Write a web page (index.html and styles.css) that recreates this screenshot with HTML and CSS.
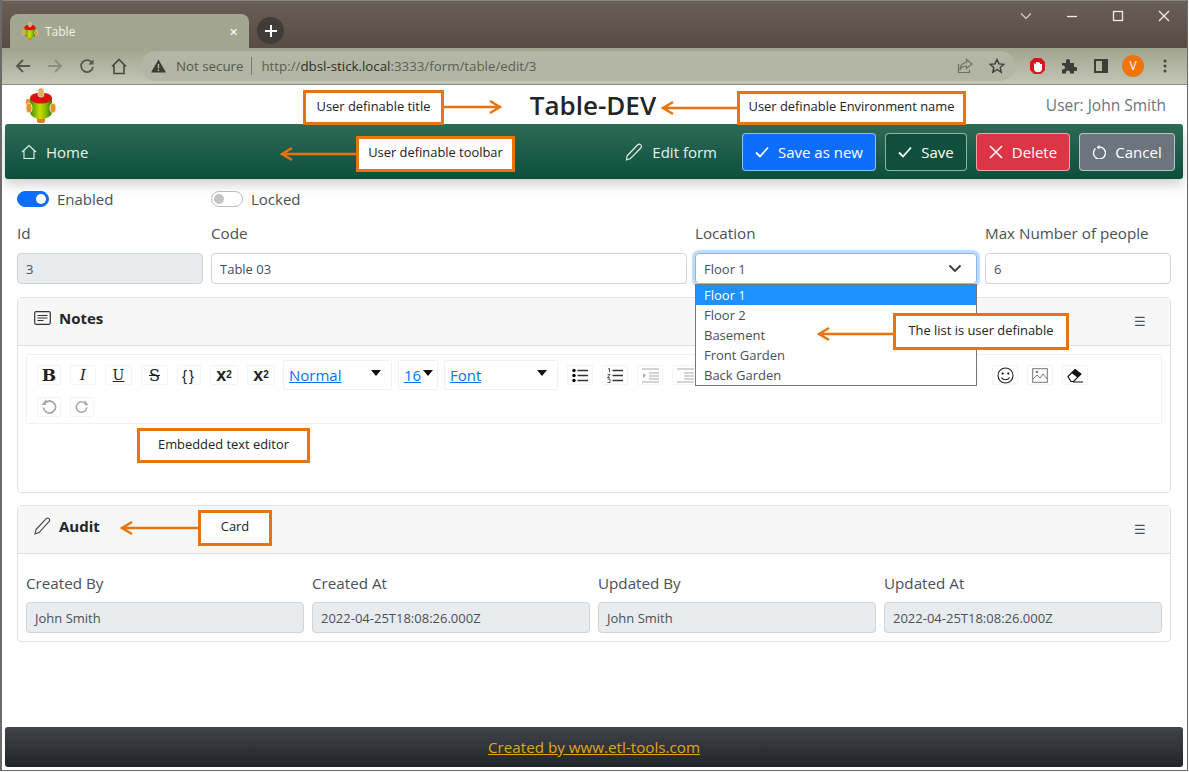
FILE: index.html
```html
<!DOCTYPE html>
<html lang="en">
<head>
  <meta charset="UTF-8">
  <title>Table</title>
  <link rel="stylesheet" href="styles.css">
</head>
<body>
  <svg class="defs" width="0" height="0">
    <defs>
      <linearGradient id="ball" x1="0" y1="0" x2="1" y2="0">
        <stop offset="0" stop-color="#3f8f00"/>
        <stop offset="0.45" stop-color="#c8dc00"/>
        <stop offset="0.7" stop-color="#8cc000"/>
        <stop offset="1" stop-color="#2f7a00"/>
      </linearGradient>
      <symbol id="logo" viewBox="0 0 32 36">
        <rect x="12" y="28" width="8" height="8" rx="2" fill="#e8801a"/>
        <rect x="1" y="12" width="5" height="8" rx="2" fill="#ef8f20"/>
        <path d="M5 11h22v14c0 4-5 7-11 7S5 29 5 25z" fill="url(#ball)"/>
        <ellipse cx="4" cy="21" rx="3" ry="5" fill="#e8902a" stroke="#f7ecc4"/>
        <ellipse cx="28" cy="21" rx="3" ry="5" fill="#e8902a" stroke="#f7ecc4"/>
        <ellipse cx="16" cy="11" rx="11" ry="5.500" fill="#dc1010"/>
        <rect x="13" y="1" width="6" height="9" rx="2.500" fill="#dcae68" stroke="#f7ecc4" stroke-width=".7"/>
      </symbol>
    </defs>
  </svg>

  <div class="window">
    <div class="tabbar">
      <div class="tab">
        <svg class="favicon"><use href="#logo"/></svg>
        <span class="tab-title">Table</span>
        <span class="tab-close">✕</span>
      </div>
      <div class="new-tab">
        <svg width="14" height="14" viewBox="0 0 14 14"><path d="M7 1v12M1 7h12" stroke="#fff" stroke-width="2"/></svg>
      </div>
      <div class="win-controls">
        <svg width="12" height="12" viewBox="0 0 12 12"><path d="M1 3.500l5 5 5-5" fill="none" stroke="#d5d0c8" stroke-width="1.200"/></svg>
        <svg width="12" height="12" viewBox="0 0 12 12"><path d="M1 6.500h10" stroke="#eee" stroke-width="1.300"/></svg>
        <svg width="12" height="12" viewBox="0 0 12 12"><rect x="1.500" y="1.500" width="9" height="9" fill="none" stroke="#eee" stroke-width="1.300"/></svg>
        <svg width="12" height="12" viewBox="0 0 12 12"><path d="M1 1l10 10M11 1L1 11" stroke="#eee" stroke-width="1.300"/></svg>
      </div>
    </div>

    <div class="addressbar">
      <div class="nav-icons">
        <svg width="16" height="16" viewBox="0 0 16 16"><path d="M15 8H2M8 2L2 8l6 6" fill="none" stroke="#55584e" stroke-width="1.800"/></svg>
        <svg width="16" height="16" viewBox="0 0 16 16"><path d="M1 8h13M8 2l6 6-6 6" fill="none" stroke="#8b8f7e" stroke-width="1.800"/></svg>
        <svg width="16" height="16" viewBox="0 0 16 16"><path d="M13.500 5.500A6 6 0 1 0 14 9" fill="none" stroke="#55584e" stroke-width="1.800"/><path d="M14.500 1.500v5h-5z" fill="#55584e"/></svg>
        <svg width="16" height="17" viewBox="0 0 16 17"><path d="M1 8.500L8 1.500l7 7M3 7.500v8h10v-8" fill="none" stroke="#45483f" stroke-width="1.600"/></svg>
      </div>
      <div class="omnibox">
        <svg width="15" height="14" viewBox="0 0 15 14"><path d="M7.500 0.500L15 13.500H0z" fill="#3c3f38"/><path d="M7.500 5v4.500M7.500 10.500v1.500" stroke="#b3b6a4" stroke-width="1.400"/></svg>
        <span class="not-secure">Not secure</span>
        <span class="url"><span class="url-dim">http://</span>dbsl-stick.local<span class="url-dim">:3333/form/table/edit/3</span></span>
        <span class="omni-right">
          <svg width="16" height="16" viewBox="0 0 16 16"><path d="M9.500 1.500L15 6l-5.500 4.500V8C6 8 4 9.500 3 12c0-4.500 2.500-7 6.500-7.500zM1.500 6v8.500h11V12" fill="none" stroke="#6d7063" stroke-width="1.200"/></svg>
          <svg width="16" height="16" viewBox="0 0 16 16"><path d="M8 1.500l2 4.400 4.800.5-3.600 3.200 1 4.700L8 11.500l-4.200 2.800 1-4.700L1.200 6.400 6 5.900z" fill="none" stroke="#3c3f38" stroke-width="1.400"/></svg>
        </span>
      </div>
      <div class="ext-icons">
        <span class="ext-cell"><svg width="17" height="18" viewBox="0 0 17 18"><path d="M5 1h7l4 4v8l-4 4H5l-4-4V5z" fill="#d8141c"/><path d="M6 13V6.500M8 13V5M10 13V5.500M12 13V7M6 13c1 1.500 5 1.500 6 0" stroke="#fff" stroke-width="2" fill="none"/></svg></span>
        <span class="ext-cell"><svg width="16" height="16" viewBox="0 0 16 16"><path d="M1 5h4V3a2 2 0 0 1 4 0v2h4v4h1.500a2 2 0 0 1 0 4H13v2.500H9v-1a2 2 0 0 0-4 0v1H1v-4h1a2 2 0 0 0 0-4H1z" fill="#3c3f38"/></svg></span>
        <span class="ext-cell"><svg width="14" height="14" viewBox="0 0 14 14"><rect x="1" y="1" width="12" height="12" fill="none" stroke="#3c3f38" stroke-width="2"/><rect x="8" y="1" width="5" height="12" fill="#3c3f38"/></svg></span>
        <span class="ext-cell"><span class="avatar">V</span></span>
        <span class="ext-cell"><svg width="4" height="14" viewBox="0 0 4 14"><circle cx="2" cy="2" r="1.500" fill="#45483f"/><circle cx="2" cy="7" r="1.500" fill="#45483f"/><circle cx="2" cy="12" r="1.500" fill="#45483f"/></svg></span>
      </div>
    </div>

    <div class="page">
      <header class="page-header">
        <svg class="logo"><use href="#logo"/></svg>
        <h1 class="page-title">Table-DEV</h1>
        <span class="user-name">User: John Smith</span>
      </header>

      <nav class="toolbar">
        <a class="nav-link">
          <svg width="16" height="16" viewBox="0 0 16 16"><path d="M1 8l7-6.500L15 8M3 6.500V14.500h10V6.500" fill="none" stroke="#e8f0ec" stroke-width="1.100"/></svg>
          Home
        </a>
        <div class="toolbar-right">
          <a class="nav-link nav-edit">
            <svg width="18" height="18" viewBox="0 0 18 18"><path d="M2 13L12.500 2a2.200 2.200 0 0 1 3.300 3L5.500 15.500 1.500 17z" fill="none" stroke="#e8f0ec" stroke-width="1.100"/></svg>
            Edit form
          </a>
          <button class="btn btn-blue"><svg class="btn-icon" viewBox="0 0 14 14"><path d="M1 7.500l4 4 8-9" fill="none" stroke="#fff" stroke-width="1.800"/></svg>Save as new</button>
          <button class="btn btn-green"><svg class="btn-icon" viewBox="0 0 14 14"><path d="M1 7.500l4 4 8-9" fill="none" stroke="#fff" stroke-width="1.800"/></svg>Save</button>
          <button class="btn btn-red"><svg class="btn-icon" viewBox="0 0 14 14"><path d="M1 1l12 12M13 1L1 13" stroke="#fff" stroke-width="1.500"/></svg>Delete</button>
          <button class="btn btn-gray"><svg class="btn-icon" viewBox="0 0 14 14"><path d="M3.500 3.500a6 6 0 1 0 4-1.500" fill="none" stroke="#fff" stroke-width="1.400"/><path d="M7.500 0v4.500L4.500 2.200z" fill="#fff"/></svg>Cancel</button>
        </div>
      </nav>

      <main class="content">
        <div class="switches">
          <label class="switch-item switch-first"><span class="switch on"></span>Enabled</label>
          <label class="switch-item"><span class="switch"></span>Locked</label>
        </div>

        <div class="fields fields-top">
          <div class="field">
            <label class="field-label">Id</label>
            <div class="input readonly">3</div>
          </div>
          <div class="field">
            <label class="field-label">Code</label>
            <div class="input">Table 03</div>
          </div>
          <div class="field">
            <label class="field-label">Location</label>
            <div class="input select-open">
              Floor 1
              <svg width="14" height="9" viewBox="0 0 14 9"><path d="M1.500 1.500L7 7l5.500-5.500" fill="none" stroke="#343a40" stroke-width="1.800"/></svg>
            </div>
            <ul class="dropdown">
              <li class="selected">Floor 1</li>
              <li>Floor 2</li>
              <li>Basement</li>
              <li>Front Garden</li>
              <li>Back Garden</li>
            </ul>
          </div>
          <div class="field">
            <label class="field-label">Max Number of people</label>
            <div class="input">6</div>
          </div>
        </div>

        <section class="card card-notes">
          <div class="card-header">
            <svg width="17" height="14" viewBox="0 0 17 14"><rect x="0.700" y="0.700" width="15.600" height="12.600" rx="1.500" fill="none" stroke="#333" stroke-width="1.200"/><path d="M3.500 4.500h10M3.500 7h10M3.500 9.500h6" stroke="#333" stroke-width="1.100"/></svg>
            <span class="card-title">Notes</span>
            <span class="card-menu">☰</span>
          </div>
          <div class="card-body">
            <div class="editor-tools">
              <span class="tool w24 t-bold">B</span>
              <span class="tool w26 t-italic">I</span>
              <span class="tool w27 t-under">U</span>
              <span class="tool w27 t-strike">S</span>
              <span class="tool w24 t-code">{}</span>
              <span class="tool w28 t-script">x<sup>2</sup></span>
              <span class="tool w28 t-script">x<sub>2</sub></span>
              <span class="tool-select sel-normal"><a>Normal</a><i class="caret"></i></span>
              <span class="tool-select sel-size"><a>16</a><i class="caret"></i></span>
              <span class="tool-select sel-font"><a>Font</a><i class="caret"></i></span>
              <span class="tool w26"><svg width="16" height="15" viewBox="0 0 16 15"><path d="M5.500 2.500H16M5.500 7.500H16M5.500 12.500H16" stroke="#333" stroke-width="1.300"/><circle cx="2" cy="2.500" r="1.700"/><circle cx="2" cy="7.500" r="1.700"/><circle cx="2" cy="12.500" r="1.700"/></svg></span>
              <span class="tool w26"><svg width="16" height="15" viewBox="0 0 16 15"><path d="M5.500 2.500H16M5.500 7.500H16M5.500 12.500H16" stroke="#333" stroke-width="1.300"/><path d="M1 1l1.500-.5v4M.5 6.500h2.500l-2.500 3h2.500M.5 11h2.500v3.500H.5" fill="none" stroke="#333" stroke-width=".8"/></svg></span>
              <span class="tool w26"><svg width="17" height="15" viewBox="0 0 17 15"><path d="M0 1h17M7 5h10M7 8h10M7 11h10M0 14h17" stroke="#aaa" stroke-width="1.200"/><path d="M1 5l3 2.500L1 10z" fill="#aaa"/></svg></span>
              <span class="tool w26"><svg width="17" height="15" viewBox="0 0 17 15"><path d="M0 1h17M7 5h10M7 8h10M7 11h10M0 14h17" stroke="#aaa" stroke-width="1.200"/></svg></span>
              <span class="tool w26"></span>
              <span class="tool w26"></span>
              <span class="tool w26"></span>
              <span class="tool w26"></span>
              <span class="tool w26"></span>
              <span class="tool w26"></span>
              <span class="tool w26"></span>
              <span class="tool w26"></span>
              <span class="tool w26 tool-emoji"><svg width="17" height="17" viewBox="0 0 17 17"><circle cx="8.500" cy="8.500" r="7.500" fill="none" stroke="#222" stroke-width="1.100"/><circle cx="5.700" cy="6.500" r="1.100"/><circle cx="11.300" cy="6.500" r="1.100"/><path d="M4.500 10.500c1.500 3 6.500 3 8 0" fill="none" stroke="#222" stroke-width="1.100"/></svg></span>
              <span class="tool w26"><svg width="16" height="15" viewBox="0 0 16 15"><rect x="0.700" y="0.700" width="14.600" height="13.600" fill="none" stroke="#777"/><path d="M1 11l4-4 3 3 3-4 4 5" fill="none" stroke="#777"/><circle cx="5" cy="4" r="1.200" fill="#777"/></svg></span>
              <span class="tool w26"><svg width="16" height="15" viewBox="0 0 16 15"><path d="M1 8.500L8 1.500l6 4.500-7.500 7.500H4z" fill="#fff" stroke="#111" stroke-width="1.100"/><path d="M8 1.500l6 4.500-3.500 3.500-6-4.500z" fill="#111"/><path d="M6 14h10" stroke="#111"/></svg></span>
              <span class="tool-break"></span>
              <span class="tool w24"><svg width="16" height="16" viewBox="0 0 16 16"><path d="M4 4a6 6 0 1 1-1.500 4.500" fill="none" stroke="#aaa" stroke-width="1.800"/><path d="M5 0v6H0.500z" fill="#aaa"/></svg></span>
              <span class="tool w24"><svg width="14" height="16" viewBox="0 0 16 16"><path d="M12 4a6 6 0 1 0 1.500 4.500" fill="none" stroke="#aaa" stroke-width="1.800"/><path d="M11 0v6h4.500z" fill="#aaa"/></svg></span>
            </div>
          </div>
        </section>

        <section class="card card-audit">
          <div class="card-header">
            <svg width="17" height="18" viewBox="0 0 17 18"><path d="M2 12.500L12 1.800a2 2 0 0 1 3 2.800L5 15.500 1 17z" fill="none" stroke="#444" stroke-width="1.100"/></svg>
            <span class="card-title">Audit</span>
            <span class="card-menu">☰</span>
          </div>
          <div class="card-body audit-body">
            <div class="fields fields-audit">
              <div class="field">
                <label class="field-label">Created By</label>
                <div class="input readonly">John Smith</div>
              </div>
              <div class="field">
                <label class="field-label">Created At</label>
                <div class="input readonly">2022-04-25T18:08:26.000Z</div>
              </div>
              <div class="field">
                <label class="field-label">Updated By</label>
                <div class="input readonly">John Smith</div>
              </div>
              <div class="field">
                <label class="field-label">Updated At</label>
                <div class="input readonly">2022-04-25T18:08:26.000Z</div>
              </div>
            </div>
          </div>
        </section>
      </main>

      <footer class="page-footer"><a>Created by www.etl-tools.com</a></footer>
    </div>

    <!-- callouts drawn on top of the screenshot -->
    <div class="note note-title">User definable title</div>
    <div class="note note-env">User definable Environment name</div>
    <div class="note note-toolbar">User definable toolbar</div>
    <div class="note note-list">The list is user definable</div>
    <div class="note note-editor">Embedded text editor</div>
    <div class="note note-card">Card</div>
    <svg class="arrows" width="1189" height="772" viewBox="0 0 1189 772">
      <g fill="none" stroke="#e8740f" stroke-width="2.500">
        <path d="M443 107H499M490 101l10 6-10 6"/>
        <path d="M737 108H664M673 102l-10 6 10 6"/>
        <path d="M356 154H283M292 148l-10 6 10 6"/>
        <path d="M893 334H820M829 328l-10 6 10 6"/>
        <path d="M198 528H123M132 522l-10 6 10 6"/>
      </g>
    </svg>
  </div>
</body>
</html>
```

FILE: styles.css
```css
* {
  box-sizing: border-box;
}
body {
  margin: 0;
  background: #fff;
  font-family: 'Open Sans', 'Noto Sans', sans-serif;
  font-size: 15px;
  color: #495057;
}
.defs {
  position: absolute;
}

.window {
  position: relative;
  display: flex;
  flex-direction: column;
  width: 1188px;
  height: 771px;
  border: 1px solid #6a6a6a;
  border-left-width: 2px;
  border-top: 0;
  overflow: hidden;
}

/* browser chrome */
.tabbar {
  display: flex;
  align-items: flex-end;
  height: 48px;
  padding-left: 8px;
  background: linear-gradient(to bottom, #6a5f56, #574b42);
  border-top: 1px solid #8a8580;
}
.tab {
  display: flex;
  align-items: center;
  width: 239px;
  height: 34px;
  padding: 0 11px 0 12px;
  background: #a3a791;
  border-radius: 8px 8px 0 0;
  color: #f2f2ea;
  font-size: 12px;
}
.favicon {
  width: 16px;
  height: 18px;
  margin-right: 7px;
}
.tab-title {
  flex: 1;
}
.tab-close {
  font-size: 11px;
  color: #fff;
}
.new-tab {
  display: flex;
  align-items: center;
  justify-content: center;
  width: 27px;
  height: 27px;
  margin: 0 0 4px 8px;
  border-radius: 50%;
  background: #3f3c39;
}
.win-controls {
  display: flex;
  gap: 34px;
  margin: 0 17px 26px auto;
}
.addressbar {
  display: flex;
  align-items: center;
  height: 37px;
  padding-left: 13px;
  background: linear-gradient(to bottom, #a0a48e, #c4c6b6);
  border-bottom: 1px solid #8e8f86;
}
.nav-icons {
  display: flex;
  gap: 16px;
  width: 126px;
}
.omnibox {
  display: flex;
  align-items: center;
  width: 874px;
  height: 30px;
  padding: 0 10px;
  border-radius: 15px;
  background: #b3b6a4;
  color: #55584e;
  font-size: 13.300px;
}
.not-secure {
  margin-left: 10px;
  padding-right: 8px;
  border-right: 1px solid #777a6d;
  color: #55584e;
}
.url {
  margin-left: 9px;
  color: #2c2e28;
}
.url-dim {
  color: #5c5f54;
}
.omni-right {
  display: flex;
  gap: 16px;
  margin-left: auto;
}
.ext-icons {
  display: flex;
  align-items: center;
  margin-left: 6px;
}
.ext-cell {
  display: flex;
  align-items: center;
  justify-content: center;
  width: 32px;
}
.avatar {
  width: 22px;
  height: 22px;
  border-radius: 50%;
  background: #ef7409;
  color: #fff;
  font-size: 12px;
  line-height: 22px;
  text-align: center;
}

/* page */
.page {
  flex: 1;
  display: flex;
  flex-direction: column;
  min-height: 0;
}
.page-header {
  display: flex;
  align-items: center;
  justify-content: space-between;
  height: 39px;
  padding: 0 21px 0 23px;
}
.logo {
  width: 32px;
  height: 36px;
}
.page-title {
  margin: 0 0 0 83px;
  font-size: 26px;
  font-weight: 600;
  color: #212529;
}
.user-name {
  color: #6c757d;
  font-size: 15.500px;
}
.toolbar {
  display: flex;
  align-items: center;
  justify-content: space-between;
  height: 55px;
  margin: 0 4px 0 3px;
  padding: 0 8px 0 16px;
  background: linear-gradient(to bottom, #2f6a57, #0b4f3b);
  border-radius: 3px;
  box-shadow: 0 6px 12px rgba(0, 0, 0, 0.18);
}
.nav-link {
  display: flex;
  align-items: center;
  gap: 9px;
  color: #e8f0ec;
}
.toolbar-right {
  display: flex;
  align-items: center;
  gap: 9px;
}
.nav-edit {
  margin-right: 16px;
}
.btn {
  display: flex;
  align-items: center;
  justify-content: center;
  gap: 9px;
  height: 38px;
  border: 1px solid rgba(255, 255, 255, 0.55);
  border-radius: 4px;
  color: #fff;
  font: inherit;
}
.btn-icon {
  width: 14px;
  height: 14px;
}
.btn-blue {
  width: 134px;
  background: #0d6efd;
}
.btn-green {
  width: 82px;
  background: #0f4f3b;
}
.btn-red {
  width: 94px;
  background: #dc3545;
}
.btn-gray {
  width: 96px;
  background: #6c757d;
}

.content {
  flex: 1;
  padding: 0 16px 0 15px;
}
.switches {
  display: flex;
  height: 43px;
  padding-top: 10px;
}
.switch-item {
  display: flex;
  align-items: center;
  gap: 8px;
  height: 20px;
  color: #495057;
}
.switch-first {
  width: 194px;
}
.switch {
  position: relative;
  width: 32px;
  height: 16px;
  border: 1px solid #bdbdbd;
  border-radius: 8px;
  background: #fff;
}
.switch::after {
  content: "";
  position: absolute;
  left: 2px;
  top: 2px;
  width: 10px;
  height: 10px;
  border-radius: 50%;
  background: #c4c4c4;
}
.switch.on {
  border-color: #0d6efd;
  background: #0d6efd;
}
.switch.on::after {
  left: 18px;
  background: #fff;
}

.fields {
  display: grid;
  gap: 8px;
}
.fields-top {
  grid-template-columns: 186px 476px 282px 186px;
}
.fields-audit {
  grid-template-columns: repeat(4, 278px);
}
.field {
  position: relative;
}
.field-label {
  display: block;
  height: 31px;
  line-height: 22px;
  font-size: 15.200px;
  color: #495057;
}
.input {
  display: flex;
  align-items: center;
  justify-content: space-between;
  height: 31px;
  padding: 0 8px;
  border: 1px solid #ced4da;
  border-radius: 4px;
  background: #fff;
  font-size: 13px;
  color: #495057;
}
.input.readonly {
  background: #e9ecef;
}
.select-open {
  border-color: #86b7fe;
  box-shadow: 0 0 0 3px rgba(13, 110, 253, 0.25);
  padding-right: 14px;
}
.dropdown {
  position: absolute;
  left: 0;
  right: 0;
  top: 62px;
  z-index: 2;
  margin: 0;
  padding: 0;
  list-style: none;
  background: #fff;
  border: 1px solid #767676;
  font-size: 13px;
}
.dropdown li {
  height: 20px;
  padding: 0 8px;
  line-height: 20px;
}
.dropdown .selected {
  background: #1e90ff;
  color: #fff;
}

.card {
  border: 1px solid #e2e3e5;
  border-radius: 4px;
  background: #fff;
}
.card-notes {
  height: 196px;
  margin-top: 13px;
}
.card-audit {
  height: 137px;
  margin-top: 12px;
}
.card-header {
  display: flex;
  align-items: center;
  height: 48px;
  padding: 0 24px 7px 16px;
  background: #f7f7f7;
  border-bottom: 1px solid #dfdfdf;
  color: #212529;
}
.card-title {
  margin-left: 8px;
  font-weight: 700;
}
.card-menu {
  margin: 5px 0 0 auto;
  font-size: 13px;
  color: #495057;
}
.card-body {
  padding: 8px;
}
.audit-body {
  padding-top: 18px;
}
.audit-body .field-label {
  height: 30px;
}
.editor-tools {
  display: flex;
  flex-wrap: wrap;
  align-content: flex-start;
  align-items: center;
  column-gap: 9px;
  row-gap: 3px;
  height: 70px;
  padding: 5px 10px;
  border: 1px solid #f1f1f1;
  border-radius: 2px;
}
.tool {
  display: flex;
  align-items: center;
  justify-content: center;
  height: 20px;
  border: 1px solid #f4f4f4;
  border-radius: 2px;
  font-family: 'DejaVu Serif', 'Liberation Serif', serif;
  font-size: 15px;
  white-space: nowrap;
  color: #222;
}
.tool-break {
  flex-basis: 100%;
  height: 1px;
}
.w24 { width: 24px; }
.w26 { width: 26px; }
.w27 { width: 27px; }
.w28 { width: 28px; }
.t-bold { font-weight: 700; font-size: 17px; }
.t-italic { font-style: italic; font-size: 15px; }
.t-under { text-decoration: underline; font-size: 14px; }
.t-strike { text-decoration: line-through; font-size: 16px; }
.t-code { font-family: 'Liberation Sans', sans-serif; font-size: 15px; letter-spacing: 2px; }
.t-script { font-family: 'Liberation Sans', sans-serif; font-weight: 700; font-size: 18px; }
.t-script sup,
.t-script sub {
  font-size: 10px;
  line-height: 0;
}
.tool-select {
  display: flex;
  align-items: center;
  justify-content: space-between;
  height: 30px;
  padding: 0 10px 0 5px;
  border: 1px solid #f1f1f1;
  border-radius: 2px;
  margin-right: -3px;
}
.tool-select a {
  color: #0d6efd;
  text-decoration: underline;
  font-size: 15px;
}
.sel-normal { width: 109px; margin-left: -1px; }
.sel-size { width: 40px; padding-right: 4px; }
.sel-font { width: 114px; margin-right: 0; }
.caret {
  width: 0;
  height: 0;
  margin-bottom: 4px;
  border: 5px solid transparent;
  border-top: 6px solid #111;
  border-bottom: 0;
}
.tool-emoji {
  margin-left: 5px;
}

.page-footer {
  height: 40px;
  margin: 0 4px 3px 3px;
  background: linear-gradient(to bottom, #40444a, #212529);
  border-radius: 3px;
  text-align: center;
  font-size: 15.200px;
  line-height: 40px;
}
.page-footer a {
  color: #e0a612;
  text-decoration: underline;
}

/* callouts */
.note {
  position: absolute;
  z-index: 3;
  display: flex;
  align-items: center;
  justify-content: center;
  padding-bottom: 4px;
  background: #fff;
  border: 3px solid #e8740f;
  color: #222;
  font-size: 12.900px;
}
.note-title { left: 301px; top: 90px; width: 141px; height: 35px; }
.note-env { left: 735px; top: 91px; width: 229px; height: 34px; }
.note-toolbar { left: 354px; top: 136px; width: 159px; height: 36px; }
.note-list { left: 891px; top: 313px; width: 176px; height: 37px; }
.note-editor { left: 135px; top: 428px; width: 173px; height: 35px; }
.note-card { left: 196px; top: 510px; width: 74px; height: 36px; }
.arrows {
  position: absolute;
  left: -2px;
  top: 0;
  z-index: 3;
  pointer-events: none;
}
```
